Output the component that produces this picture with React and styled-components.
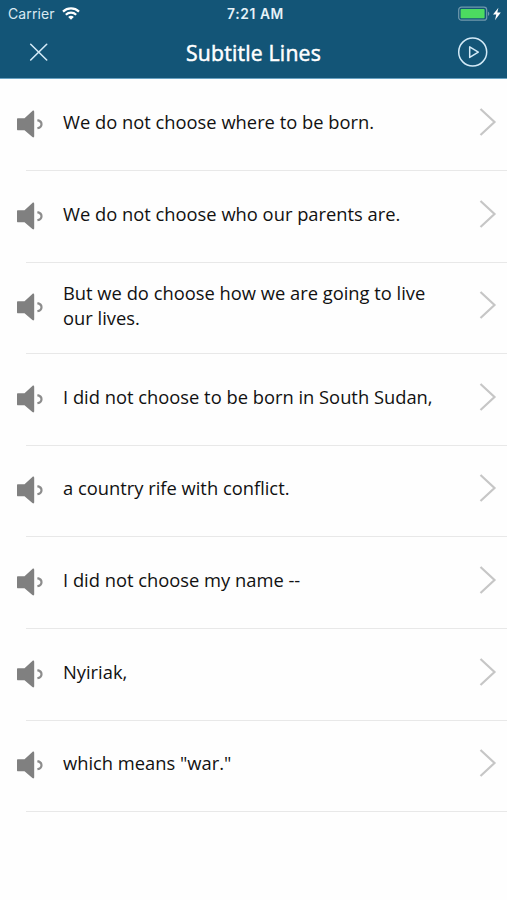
import React from 'react'
import styled, { createGlobalStyle } from 'styled-components'

const GlobalStyle = createGlobalStyle`
  * {
    box-sizing: border-box;
  }
  body {
    margin: 0;
    background-color: #fefefe;
    font-family: "Open Sans", "Noto Sans", sans-serif;
  }
`;

const Screen = styled.div`
  width: 100%;
  height: 900px;
  overflow: hidden;
  background-color: #fefefe;
`;

const TopBar = styled.header`
  height: 79.4px;
  background-color: #135577;
  border-bottom: 1px solid #69a2c2;
  color: white;
`;

const StatusBar = styled.div`
  display: grid;
  grid-template-columns: 1fr auto 1fr;
  align-items: center;
  height: 27px;
  padding: 0 5px 0 8px;
  font-family: Inter, "Liberation Sans", sans-serif;
  font-size: 14px;
  line-height: 27px;
`;

const Carrier = styled.div`
  display: flex;
  align-items: center;
  gap: 7px;
  color: #d9e9f2;
  letter-spacing: 0.1px;
`;

const Clock = styled.div`
  padding: 1px 0 0 1px;
  font-size: 13.8px;
  font-weight: 600;
  line-height: 26px;
  letter-spacing: 0.6px;
  color: #e6f2f8;
`;

const Battery = styled.div`
  display: flex;
  align-items: center;
  justify-content: flex-end;
`;

const NavBar = styled.nav`
  display: grid;
  grid-template-columns: 1fr auto 1fr;
  align-items: center;
  height: 50px;
  padding: 0 18px 0 28px;
`;

const Title = styled.h1`
  margin: 0;
  padding: 1px 10px 0 0;
  font-size: 21.2px;
  font-weight: 400;
  line-height: 28px;
  letter-spacing: 0.2px;
  -webkit-text-stroke: 0.5px white;
`;

const NavButton = styled.button`
  display: flex;
  justify-self: ${({ $right }) => ($right ? 'end' : 'start')};
  padding: 0;
  background: none;
  border: none;
  color: #d3eaf7;
  cursor: pointer;
`;

const List = styled.ul`
  margin: 0;
  padding: 0;
  list-style: none;
`;

const Row = styled.li`
  position: relative;
  display: flex;
  height: 91.62px;
  padding-left: 16px;

  &::after {
    content: "";
    position: absolute;
    left: 26px;
    right: 0;
    bottom: 0;
    height: 1px;
    background-color: #e8e8e8;
  }
`;

const SpeakerButton = styled.button`
  display: flex;
  align-items: center;
  width: 28px;
  flex-shrink: 0;
  margin-right: 19px;
  padding: 0 0 2.6px;
  background: none;
  border: none;
  cursor: pointer;
`;

const Line = styled.p`
  display: flex;
  align-items: center;
  width: 378px;
  margin: 0;
  padding-bottom: 7.6px;
  font-size: 18.33px;
  line-height: 25px;
  color: #111;
`;

const Arrow = styled.div`
  display: flex;
  align-items: center;
  margin-left: auto;
  padding: 0 10px 6.6px 0;
`;

const lines = [
  'We do not choose where to be born.',
  'We do not choose who our parents are.',
  'But we do choose how we are going to live our lives.',
  'I did not choose to be born in South Sudan,',
  'a country rife with conflict.',
  'I did not choose my name --',
  'Nyiriak,',
  'which means "war."',
]

const WifiIcon = () => (
  <svg width="18" height="13" viewBox="0 0 18 13" fill="none" stroke="#fff" strokeWidth="2.2">
    <path d="M1 4.6C5.5.4 12.5.4 17 4.6" />
    <path d="M3.8 7.7c3-2.8 7.4-2.8 10.4 0" />
    <path d="M6.2 9.9c1.6-1.5 4-1.5 5.6 0L9 12.7z" fill="#fff" stroke="none" />
  </svg>
)

const BatteryIcon = () => (
  <svg width="44" height="16" viewBox="0 0 44 16">
    <rect x="0.7" y="1.2" width="28" height="13" rx="2.8" fill="none" stroke="#7199ad" strokeWidth="1.2" />
    <rect x="2.6" y="3.1" width="24" height="9.2" rx="0.8" fill="#4cdb60" />
    <path d="M30 5.5c1.8.7 1.8 3.8 0 4.5z" fill="#7199ad" />
    <path d="M40.4 1.8 35 8.6h3.3L37 14.2l5.8-7.6h-3.5z" fill="#fff" />
  </svg>
)

const CloseIcon = () => (
  <svg width="20" height="20" viewBox="0 0 20 20" stroke="currentColor" strokeWidth="1.6" strokeLinecap="round">
    <path d="M2.7 2.3 18.7 18M18.7 2.3 2.7 18" />
  </svg>
)

const PlayIcon = () => (
  <svg width="32" height="32" viewBox="0 0 32 32" fill="none" stroke="currentColor" strokeWidth="1.5">
    <circle cx="15.7" cy="16" r="14" />
    <path d="M12.7 10.8v10.6l8.6-5.3z" strokeLinejoin="round" />
  </svg>
)

const SpeakerIcon = () => (
  <svg width="28" height="28" viewBox="0 0 28 28">
    <path d="M2 8.3h6.5L16.4 1c.8-.7 1.8-.5 1.8.7v24.6c0 1.2-1 1.4-1.8.7L8.5 20.2H2c-.7 0-1-.4-1-1V9.3c0-.6.3-1 1-1z" fill="#808080" />
    <path d="M21.4 10.1c2.6.6 4.1 2.1 4.1 4.1s-1.5 3.5-4.1 4.1" fill="none" stroke="#8c8c8c" strokeWidth="2.2" />
  </svg>
)

const ChevronIcon = () => (
  <svg width="18" height="30" viewBox="0 0 18 30" fill="none" stroke="#c6c6c6" strokeWidth="2.2">
    <path d="M1.5 2 15.5 15 1.5 28" />
  </svg>
)

const App = () => {
  return (
    <Screen>
      <GlobalStyle />

      <TopBar>
        <StatusBar>
          <Carrier>
            Carrier
            <WifiIcon />
          </Carrier>
          <Clock>7:21 AM</Clock>
          <Battery>
            <BatteryIcon />
          </Battery>
        </StatusBar>

        <NavBar>
          <NavButton aria-label="Close">
            <CloseIcon />
          </NavButton>
          <Title>Subtitle Lines</Title>
          <NavButton $right aria-label="Play">
            <PlayIcon />
          </NavButton>
        </NavBar>
      </TopBar>

      <List>
        {lines.map((line) => (
          <Row key={line}>
            <SpeakerButton aria-label="Listen">
              <SpeakerIcon />
            </SpeakerButton>
            <Line>{line}</Line>
            <Arrow>
              <ChevronIcon />
            </Arrow>
          </Row>
        ))}
      </List>
    </Screen>
  )
}

export default App
